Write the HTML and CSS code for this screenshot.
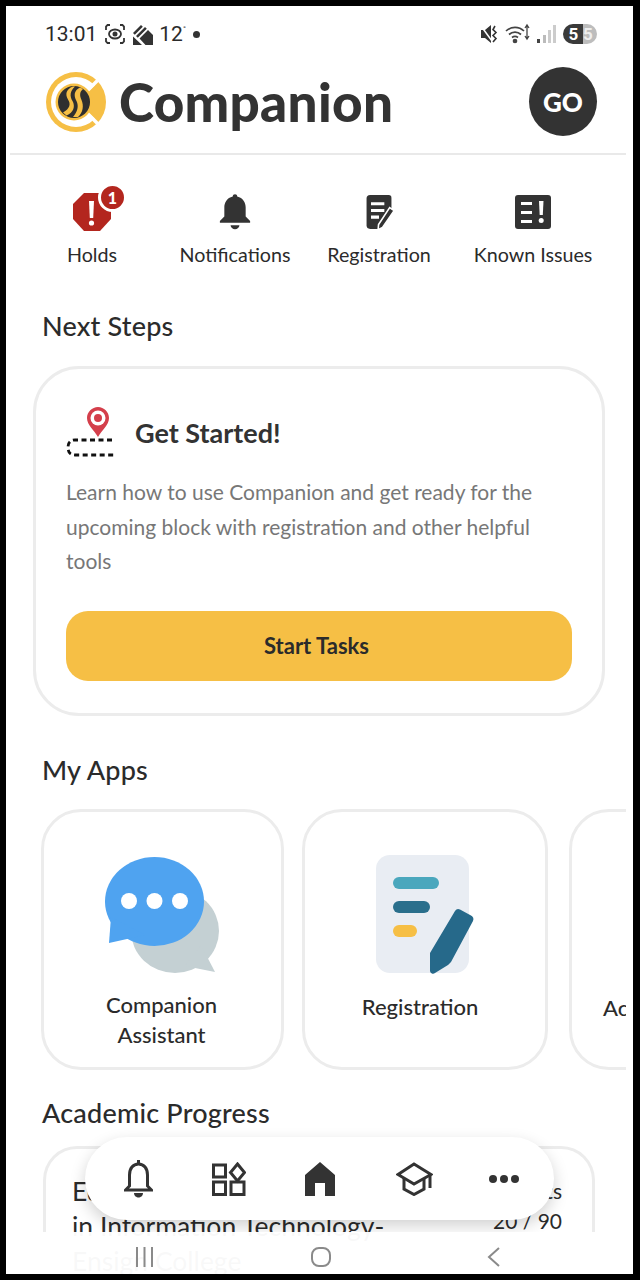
FILE: index.html
```html
<!DOCTYPE html>
<html lang="en">
<head>
<meta charset="utf-8">
<title>Companion</title>
<link rel="stylesheet" href="styles.css">
</head>
<body>
<div class="phone">
  <div class="status">
    <div class="status-left">
      <span class="clock">13:01</span>
      <svg width="24" height="24" viewBox="0 0 24 24" fill="none" stroke="#333" stroke-width="1.800"><path d="M7 3H4.500L3 4.500V8M17 3h2.500L21 4.500V8M3 16v3.500L4.500 21H7M21 16v3.500L19.500 21H17"/><ellipse cx="12" cy="12" rx="6" ry="4.500"/><circle cx="12" cy="12" r="1.600" fill="#333"/></svg>
      <svg width="22" height="22" viewBox="0 0 22 22" fill="#333"><path d="M1 10 9 2l1.800 1.800-8 8zM4 13l9-9 1.800 1.800-9 9zM1 13.500l9 8.500H1zM7.500 15.500 16 7l5 5v10h-7.500z"/></svg>
      <span class="temp">12<sup>°</sup></span>
      <span class="dot"></span>
    </div>
    <div class="status-right">
      <svg width="20" height="22" viewBox="0 0 20 22" fill="#333"><path d="M1 7h4l6-5v18l-6-5H1z"/><path d="M1 3l11 15" stroke="#fff" stroke-width="1.500"/><path d="M15 3l-2 3.500 3 3-3 3 3 3-3 3.500" fill="none" stroke="#333" stroke-width="1.600"/></svg>
      <svg width="26" height="22" viewBox="0 0 26 22" fill="none" stroke="#444" stroke-width="1.700"><path d="M1 8a13 13 0 0 1 18 0M4 11.500a9 9 0 0 1 12 0M7 14.500a5 5 0 0 1 6 0"/><circle cx="10" cy="18" r="1.500" fill="#444"/><path d="M22 2v14M20 5l2-3 2 3M20 13l2 3 2-3" stroke-width="1.300"/></svg>
      <svg width="22" height="20" viewBox="0 0 22 20"><rect x="1" y="15" width="3" height="4" fill="#444"/><rect x="7" y="11" width="3" height="8" fill="#bbb"/><rect x="12" y="6" width="3" height="13" fill="#ccc"/><rect x="17" y="1" width="3" height="18" fill="#ccc"/></svg>
      <span class="battery"><span class="bat-fill">5</span><span class="bat-rest">5</span></span>
    </div>
  </div>

  <header class="topbar">
    <div class="brand">
      <svg width="60" height="60" viewBox="0 0 60 60">
        <circle cx="30" cy="30" r="30" fill="#f6bf45"/>
        <circle cx="30" cy="30" r="25" fill="#fff"/>
        <path d="M30 30 50.500 12A27.300 27.300 0 0 1 50.500 48z" fill="#f6bf45"/>
        <path d="M36 24 56 4M36 36 56 56" stroke="#fff" stroke-width="3.500"/>
        <circle cx="28" cy="30" r="18.500" fill="#f6bf45"/>
        <circle cx="28" cy="30" r="16" fill="#2f2f2f"/>
        <path d="M27 14.500c-7 2.500-8 8-5 13 3 4.500 2 9-5 13l3.500 3c7-3 9-9 6-14.500-3-5-2.500-10 2.500-14.500zM34 15.500c-6 3-6.500 8-3.500 13.500 2.500 5 1 11-3.500 16h5c5-4.500 6-11 3.500-17-2-4.500-2-8 1.500-11z" fill="#f6bf45"/>
      </svg>
      <h1 class="title">Companion</h1>
    </div>
    <div class="avatar">GO</div>
  </header>

  <nav class="quick">
    <div class="quick-item">
      <span class="quick-icon">
        <svg width="40" height="40" viewBox="0 0 40 40"><path d="M12 1h16l11 11v15L28 39H12L1 27V12z" fill="#b3261e"/><path d="M17 9h5l-.800 17h-3.400z" fill="#fff"/><circle cx="19.500" cy="31" r="2.600" fill="#fff"/></svg>
        <span class="badge">1</span>
      </span>
      <span class="quick-label">Holds</span>
    </div>
    <div class="quick-item">
      <span class="quick-icon">
        <svg width="32" height="40" viewBox="0 0 36 40" fill="#333"><path d="M18 0c1.500 0 2.500 1 2.500 2.500C27 4 30 9.500 30 15v10l5 5v2H1v-2l5-5V15C6 9.500 9 4 15.500 2.500 15.500 1 16.500 0 18 0z"/><path d="M13 35h10c0 2.500-2.500 4.500-5 4.500s-5-2-5-4.500z"/></svg>
      </span>
      <span class="quick-label">Notifications</span>
    </div>
    <div class="quick-item">
      <span class="quick-icon">
        <svg width="32" height="38" viewBox="0 0 36 40"><path d="M8 1h21a3 3 0 0 1 3 3v13L18 39H8a4 4 0 0 1-4-4V5a4 4 0 0 1 4-4z" fill="#333"/><path d="M9 9h15v3.500H9zM9 16.500h15V20H9zM9 24h9v3.500H9z" fill="#fff"/><path d="M30 15l5 3.500-13 19-5 2.500.5-6z" fill="#333" stroke="#fff" stroke-width="1.800"/></svg>
      </span>
      <span class="quick-label">Registration</span>
    </div>
    <div class="quick-item">
      <span class="quick-icon">
        <svg width="38" height="40" viewBox="0 0 38 40"><rect x="1" y="3" width="36" height="34" rx="3" fill="#333"/><path d="M7 10h11v3H7zM7 19h11v3H7zM7 28h11v3H7z" fill="#fff"/><path d="M25 9h4.500l-.700 14h-3.100z" fill="#fff"/><circle cx="27.200" cy="28.500" r="2.500" fill="#fff"/></svg>
      </span>
      <span class="quick-label">Known Issues</span>
    </div>
  </nav>

  <h2 class="section next-title">Next Steps</h2>
  <section class="card">
    <div class="card-head">
      <svg width="54" height="50" viewBox="0 0 54 50" fill="none">
        <path d="M32 0c6 0 11 5 11 11 0 7-7 12-11 19-4-7-11-12-11-19C21 5 26 0 32 0z" fill="#d43f4b"/>
        <circle cx="32" cy="11" r="7.500" fill="#fff"/><circle cx="32" cy="11" r="4" fill="#d43f4b"/>
        <path d="M46 33H9C4 33 2 36 2 40.500S4 48 9 48H50" stroke="#111" stroke-width="2.800" stroke-dasharray="5 3.500"/>
      </svg>
      <h3 class="card-title">Get Started!</h3>
    </div>
    <p class="card-text">Learn how to use Companion and get ready for the upcoming block with registration and other helpful tools</p>
    <button class="primary" type="button">Start Tasks</button>
  </section>

  <h2 class="section apps-title">My Apps</h2>
  <div class="apps">
    <div class="app app-a">
      <svg width="116" height="118" viewBox="0 0 116 118">
        <ellipse cx="70" cy="74" rx="44" ry="42" fill="#c4d0d3"/><path d="M96 88l14 27-30-6z" fill="#c4d0d3"/>
        <ellipse cx="49.500" cy="44.500" rx="49.500" ry="44.500" fill="#4fa3f0"/><path d="M6 60l-2 26 36-8z" fill="#4fa3f0"/>
        <circle cx="24" cy="44" r="8" fill="#fff"/><circle cx="49.500" cy="44" r="8" fill="#fff"/><circle cx="75" cy="44" r="8" fill="#fff"/>
      </svg>
      <span class="app-label app-label-a">Companion Assistant</span>
    </div>
    <div class="app app-b">
      <svg width="100" height="122" viewBox="0 0 100 122">
        <rect x="1" y="1" width="93" height="118" rx="14" fill="#e9edf3"/>
        <rect x="18" y="23" width="46" height="12" rx="6" fill="#4aa7bd"/>
        <rect x="18" y="47" width="37" height="12" rx="6" fill="#2a6f8c"/>
        <rect x="18" y="71" width="24" height="12" rx="6" fill="#f6bf45"/>
        <path d="M80 57a4 4 0 0 1 5-1.500l11 6a4 4 0 0 1 2 5.500L76 108l-3 3-13 8a3 3 0 0 1-5-2V99z" fill="#26698a"/>
      </svg>
      <span class="app-label app-label-b">Registration</span>
    </div>
    <div class="app app-c">
      <span class="app-label app-label-c">Academics</span>
    </div>
  </div>

  <h2 class="section progress-title">Academic Progress</h2>
  <section class="progress">
    <div class="progress-main">Education Plan<br>in Information Technology-<br>Ensign College</div>
    <div class="progress-side">Credits<br>20 / 90</div>
  </section>

  <div class="dock">
    <svg width="29" height="38" viewBox="0 0 29 38" fill="none" stroke="#333" stroke-width="3"><path d="M14.500 4C20 4 23.500 8.500 23.500 15v11l4 4H1.500l4-4V15C5.500 8.500 9 4 14.500 4z"/><path d="M14.500 0v4"/><path d="M10 33h9c0 3-2.500 4.500-4.500 4.500S10 36 10 33z" fill="#333" stroke="none"/></svg>
    <svg width="34" height="34" viewBox="0 0 34 34" fill="none" stroke="#333" stroke-width="3"><rect x="1.500" y="3" width="12" height="12"/><path d="M25.500 2l7 8.500-7 8.500-7-8.500z"/><rect x="1.500" y="20" width="12" height="12.500"/><rect x="19" y="20" width="13" height="12.500"/></svg>
    <svg width="30" height="34" viewBox="0 0 30 34" fill="#333"><path d="M15 0 30 13V34H20V21H10V34H0V13z"/></svg>
    <svg class="dock-cap" width="37" height="34" viewBox="0 0 37 34" fill="none" stroke="#333" stroke-width="3"><path d="M18 2 35 12.500 18 22 2 12.500z"/><path d="M8 16v11l10 5.500L28 27V16"/><path d="M34 13v13"/></svg>
    <svg width="30" height="10" viewBox="0 0 30 10" fill="#333"><circle cx="4" cy="5" r="4"/><circle cx="15" cy="5" r="4"/><circle cx="26" cy="5" r="4"/></svg>
  </div>

  <div class="sysnav">
    <svg width="19" height="20" viewBox="0 0 19 20" stroke="#8a8a8a" stroke-width="2"><path d="M2 0v20M9.500 0v20M17 0v20"/></svg>
    <svg width="20" height="20" viewBox="0 0 20 20" fill="none" stroke="#8a8a8a" stroke-width="2"><rect x="1" y="1" width="18" height="18" rx="7"/></svg>
    <svg width="13" height="20" viewBox="0 0 13 20" fill="none" stroke="#8a8a8a" stroke-width="2"><path d="M12 1 2 10l10 9"/></svg>
  </div>
</div>
</body>
</html>
```
FILE: styles.css
```css
* { box-sizing: border-box; }
html, body { margin: 0; padding: 0; background: #000; }
body { width: 640px; height: 1280px; padding: 6px 7px 6px 6px; overflow: hidden; font-family: "Lato", "Noto Sans", sans-serif; color: #2b2b2b; }
.phone { position: relative; width: 627px; height: 1268px; background: #fff; overflow: hidden; }

.status { display: flex; justify-content: space-between; align-items: center; height: 30px; margin-top: 13px; padding: 0 36px 0 39px; }
.status-left, .status-right { display: flex; align-items: center; gap: 5px; }
.clock { font: 400 21px "Roboto", sans-serif; margin-right: 1px; }
.temp { font: 400 21px "Roboto", sans-serif; }
.temp sup { font-size: 8px; vertical-align: 10px; line-height: 0; }
.dot { width: 7px; height: 7px; margin-left: 2px; background: #333; border-radius: 50%; }
.battery { display: flex; height: 20px; width: 34px; border-radius: 10px; overflow: hidden; font: 700 17px/20px "Roboto", sans-serif; }
.bat-fill { width: 20px; background: #3a3a3a; color: #fff; text-align: center; padding-left: 1px; }
.bat-rest { width: 14px; background: #bdbdbd; color: #eee; text-align: center; padding-right: 4px; }

.topbar { display: flex; justify-content: space-between; align-items: center; height: 101px; margin: 5px 7px 0 4px; padding: 0 29px 4px 36px; border-bottom: 2px solid #e9e9e9; }
.brand { display: flex; align-items: center; gap: 13px; }
.title { margin: 0; font-size: 53px; font-weight: 900; letter-spacing: .3px; color: #333; line-height: 60px; }
.avatar { width: 68px; height: 69px; border-radius: 50%; background: #333; color: #fff; font-size: 26px; font-weight: 900; display: flex; align-items: center; justify-content: center; }

.quick { display: grid; grid-template-columns: 142px 144px 144px 164px; margin-top: 36px; padding-left: 15px; }
.quick-item { display: flex; flex-direction: column; align-items: center; }
.quick-icon { position: relative; height: 42px; display: flex; align-items: center; justify-content: center; }
.badge { position: absolute; top: -8px; right: -15px; width: 29px; height: 29px; border-radius: 50%; background: #b3261e; border: 3px solid #fff; color: #fff; font-size: 16px; font-weight: 900; display: flex; align-items: center; justify-content: center; }
.quick-label { margin-top: 10px; font-size: 19.700px; line-height: 24px; color: #2b2b2b; white-space: nowrap; }

.section { margin: 0; padding-left: 36px; font-size: 27px; font-weight: 500; letter-spacing: .2px; line-height: 32px; color: #2b2b2b; }
.next-title { margin-top: 43px; }
.apps-title { margin-top: 38px; }
.progress-title { margin-top: 27px; }

.card { margin: 24px 28px 0 27px; height: 350px; border: 3px solid #ececec; border-radius: 46px; padding: 0 30px; }
.card-head { display: flex; align-items: center; gap: 15px; padding-top: 38px; }
.card-title { margin: 0; font-size: 27px; font-weight: 700; color: #333; }
.card-text { margin: 0; padding-top: 18px; font-size: 21px; line-height: 34.500px; color: #777; }
.primary { display: block; width: 100%; height: 70px; margin-top: 32px; padding: 0 5px 0 0; border: 0; border-radius: 22px; background: #f6bf45; font: 700 22px "Lato", sans-serif; color: #2b2b2b; }

.apps { display: flex; gap: 18px; margin: 23px 7px 0 0; padding-left: 35px; overflow: hidden; }
.app { flex: none; height: 261px; border: 3px solid #ececec; border-radius: 40px; display: flex; flex-direction: column; align-items: center; padding-top: 45px; }
.app-a { width: 243px; }
.app-b { width: 246px; padding-top: 42px; }
.app-c { width: 240px; margin-left: 3px; align-items: flex-start; }
.app-label { width: 170px; font-size: 22px; line-height: 30px; text-align: center; color: #2b2b2b; font-weight: 500; }
.app-label-a { margin: 15px 2px 0 0; }
.app-label-b { margin: 16px 10px 0 0; }
.app-label-c { margin: 136px 0 0 31px; text-align: left; }

.progress { display: flex; justify-content: space-between; margin: 17px 38px 0 37px; height: 160px; border: 3px solid #ececec; border-bottom: 0; border-radius: 34px 34px 0 0; padding: 25px 30px 0 26px; font-size: 26.500px; line-height: 35px; }
.progress-side { text-align: right; font-size: 21px; line-height: 30px; padding-top: 2px; }

.dock { position: absolute; left: 79px; top: 1131px; width: 469px; height: 83px; background: #fff; border-radius: 42px; box-shadow: 0 6px 16px rgba(0,0,0,.18); display: flex; align-items: center; justify-content: space-between; padding: 0 35px 0 39px; }
.dock-cap { margin: 0 -3px 0 3px; }

.sysnav { position: absolute; left: 0; right: 0; top: 1226px; height: 42px; background: rgba(255,255,255,.97); display: flex; align-items: center; justify-content: space-between; padding: 8px 133px 0 129px; }
```
